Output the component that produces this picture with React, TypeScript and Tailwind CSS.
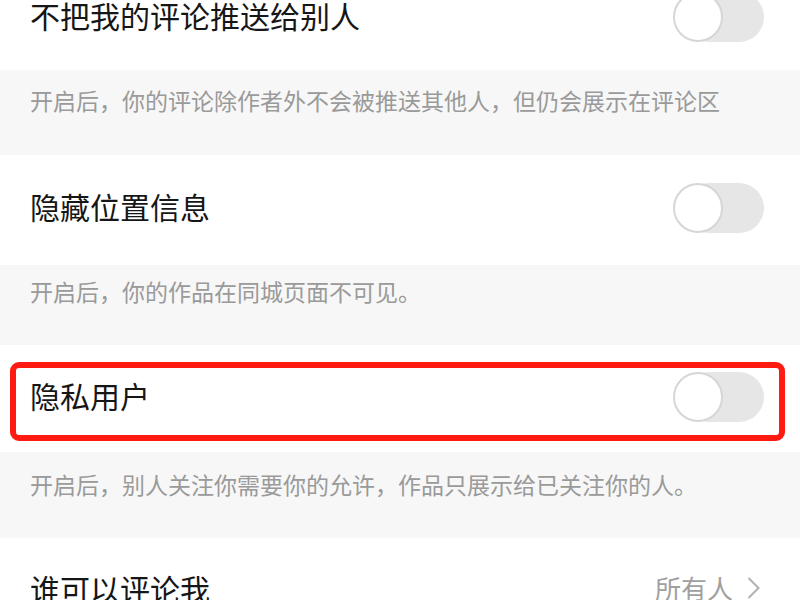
import React from "react";

const font = { fontFamily: '"Noto Sans CJK SC", "Noto Sans", sans-serif' };

function Toggle() {
  return (
    <div className="relative h-[50px] w-[91px] shrink-0">
      <div className="absolute right-0 top-0 h-[50px] w-[80px] rounded-full bg-[#e6e6e6]" />
      <div className="absolute left-0 top-0 h-[50px] w-[50px] rounded-full border-2 border-[#d6d6d6] bg-white" />
    </div>
  );
}

function SwitchRow({
  title,
  marked,
  h = "h-[110px]",
  pad = "pb-[4px]",
}: {
  title: string;
  marked?: boolean;
  h?: string;
  pad?: string;
}) {
  return (
    <div className={`relative flex items-center justify-between bg-white pl-[30px] pr-[36px] ${h} ${pad}`}>
      <span className="mb-[4px] text-[30px] leading-none text-[#161616]">{title}</span>
      <Toggle />
      {marked && (
        <div className="pointer-events-none absolute left-[10px] right-[15px] top-[17px] h-[79px] rounded-[9px] border-[6px] border-[#ff1a12]" />
      )}
    </div>
  );
}

function Note({ text, h, pt, size }: { text: string; h: string; pt: string; size: string }) {
  return (
    <div className={`bg-[#f7f7f7] pl-[30px] ${h} ${pt}`}>
      <p className={`whitespace-nowrap leading-none text-[#9a9a9a] ${size}`}>{text}</p>
    </div>
  );
}

export default function App() {
  return (
    <div className="h-[600px] w-[800px] overflow-hidden bg-white" style={font}>
      <div className="-mt-[40px]">
        <SwitchRow title="不把我的评论推送给别人" pad="pt-[4px]" />
        <Note
          text="开启后，你的评论除作者外不会被推送其他人，但仍会展示在评论区"
          h="h-[85px]"
          pt="pt-[19px]"
          size="text-[23px]"
        />
        <SwitchRow title="隐藏位置信息" />
        <Note text="开启后，你的作品在同城页面不可见。" h="h-[80px]" pt="pt-[15px]" size="text-[23px]" />
        <SwitchRow title="隐私用户" marked h="h-[107px]" />
        <Note
          text="开启后，别人关注你需要你的允许，作品只展示给已关注你的人。"
          h="h-[86px]"
          pt="pt-[21px]"
          size="text-[23px]"
        />
        <div className="flex h-[100px] items-center justify-between bg-white pl-[30px] pr-[40px]">
          <span className="text-[30px] leading-none text-[#161616]">谁可以评论我</span>
          <div className="flex items-center gap-[14px] text-[#a0a0a0]">
            <span className="text-[26px] leading-none">所有人</span>
            <svg width="13" height="24" viewBox="0 0 13 24" fill="none">
              <path d="M1.5 2l10 10-10 10" stroke="#b0b0b0" strokeWidth="2" />
            </svg>
          </div>
        </div>
      </div>
    </div>
  );
}
